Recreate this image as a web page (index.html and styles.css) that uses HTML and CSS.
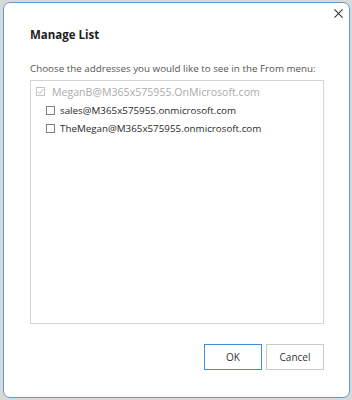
FILE: index.html
```html
<!DOCTYPE html>
<html lang="en">
<head>
  <meta charset="UTF-8">
  <title>Manage List</title>
  <link rel="stylesheet" href="styles.css">
</head>
<body>

  <div class="dialog">
    <div class="close-row">
      <button class="close" aria-label="Close">
        <svg width="9" height="9" viewBox="0 0 10 10">
          <path d="M0.5 0.5 L9.5 9.5 M9.5 0.5 L0.5 9.5" stroke="#333" stroke-width="1.2" fill="none"/>
        </svg>
      </button>
    </div>

    <h1>Manage List</h1>
    <p class="hint">Choose the addresses you would like to see in the From menu:</p>

    <!-- address list -->
    <div class="list">
      <label class="item disabled">
        <span class="box checked">
          <svg width="7" height="7" viewBox="0 0 9 9">
            <path d="M1 4.8 L3.4 7.2 L8 1.5" stroke="#b0b0b0" stroke-width="1.1" fill="none"/>
          </svg>
        </span>
        MeganB@M365x575955.OnMicrosoft.com
      </label>
      <label class="item child">
        <span class="box"></span>
        sales@M365x575955.onmicrosoft.com
      </label>
      <label class="item child">
        <span class="box"></span>
        TheMegan@M365x575955.onmicrosoft.com
      </label>
    </div>

    <div class="actions">
      <button class="btn primary">OK</button>
      <button class="btn">Cancel</button>
    </div>
  </div>

</body>
</html>
```

FILE: styles.css
```css
body {
  margin: 0;
  background-color: #d9d9d9;
  font-family: 'Open Sans', 'Noto Sans', sans-serif;
  color: #333;
}
.dialog {
  box-sizing: border-box;
  height: 396px;
  margin: 2px 2px 2px 3px;
  padding: 0 25px 0 26px;
  display: flex;
  flex-direction: column;
  background: white;
  border: 1px solid #5b9bd5;
  border-radius: 7px;
}
.close-row {
  display: flex;
  justify-content: flex-end;
  height: 24px;
  margin-right: -19px;
}
.close {
  margin-top: 6px;
  padding: 0;
  width: 9px;
  height: 9px;
  line-height: 0;
  background: none;
  border: none;
  cursor: pointer;
}
h1 {
  margin: 0;
  font-size: 11.5px;
  line-height: 16px;
  font-weight: bold;
  color: #1e1e1e;
}
.hint {
  margin: 18px 0 4px;
  font-size: 9.8px;
  line-height: 15px;
  color: #555;
  white-space: nowrap;
}
.list {
  box-sizing: border-box;
  height: 244px;
  padding: 4px 5px;
  border: 1px solid #d4d4d4;
  display: flex;
  flex-direction: column;
  gap: 5.5px;
}
.item {
  display: flex;
  align-items: center;
  gap: 5px;
  font-size: 9.8px;
  color: #2a2a2a;
  height: 13px;
  white-space: nowrap;
}
.item.disabled {
  font-size: 10.6px;
  color: #ababab;
  gap: 7px;
}
.item.child {
  padding-left: 10px;
}
.box {
  box-sizing: border-box;
  width: 9px;
  height: 9px;
  border: 1px solid #808080;
  display: flex;
  align-items: center;
  justify-content: center;
  flex: none;
}
.box.checked {
  border-color: #c4c4c4;
}
.actions {
  display: flex;
  justify-content: flex-end;
  gap: 4px;
  margin-top: 20px;
}
.btn {
  width: 58px;
  height: 26px;
  padding: 0;
  font-family: inherit;
  font-size: 10px;
  color: #333;
  background: white;
  border: 1px solid #cacaca;
  border-radius: 0;
}
.btn.primary {
  border: 1px solid #3e8ede;
}
```
